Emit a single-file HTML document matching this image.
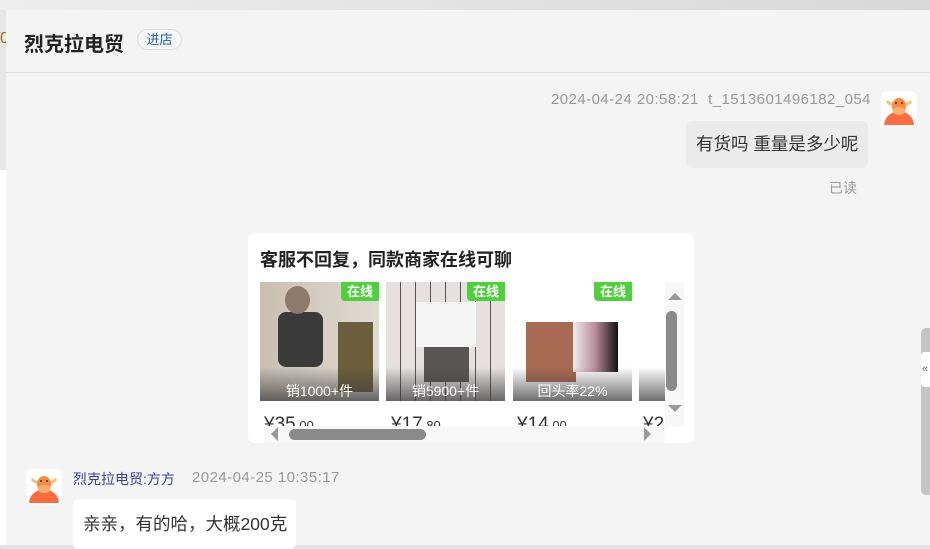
<!DOCTYPE html>
<html><head><meta charset="utf-8"><style>
*{margin:0;padding:0;box-sizing:border-box}
body{width:930px;height:545px;overflow:hidden;background:#e4e4e4;font-family:"Liberation Sans","Noto Sans CJK SC",sans-serif;position:relative}
.abs{position:absolute}
.av{width:36px;height:36px;border-radius:6px;background:#fff;overflow:hidden}
.tag{position:absolute;top:0;right:0;background:#4fd13c;color:#fff;font-size:13px;font-weight:bold;padding:0 6px;height:19px;line-height:19px;border-radius:0 0 0 4px}
.card{position:absolute;top:49px;width:119px;height:119px;overflow:hidden}
.ov{position:absolute;left:0;right:0;bottom:0;height:34px;background:linear-gradient(transparent,rgba(60,60,60,.75));color:#fff;font-size:14px;text-align:center;line-height:48px}
.pr{position:absolute;top:181px;font-size:19px;color:#333}
.pr small{font-size:13px}
.ts{font-size:15px;color:#999;letter-spacing:.45px}
</style></head><body>
<div class="abs" style="left:0;top:0;width:930px;height:10px;background:linear-gradient(90deg,#ededed,#d8d8d8)"></div>
<div class="abs" style="left:0;top:10px;width:6px;height:160px;background:#e6e6e6"></div>
<div class="abs" style="left:0;top:170px;width:6px;height:375px;background:#fff"></div>
<div class="abs" style="left:0;top:30px;font-size:16px;color:#a07020">0</div>
<div class="abs" style="left:6px;top:10px;width:924px;height:535px;background:#f4f4f4"></div>
<div class="abs" style="left:6px;top:72px;width:924px;height:1px;background:#e0e0e0"></div>
<div class="abs" style="left:24px;top:28px;font-size:20px;font-weight:bold;color:#222">烈克拉电贸</div>
<div class="abs" style="left:137px;top:29px;width:45px;height:21px;border:1px solid #ddd;border-radius:11px;background:#f7f7f7;font-size:13px;color:#1a5fc4;text-align:center;line-height:19px">进店</div>

<div class="abs ts" style="left:551px;top:91px">2024-04-24 20:58:21&nbsp;&nbsp;t_1513601496182_054</div>
<div class="abs av" style="left:881px;top:91px"><svg width="36" height="36" viewBox="0 0 36 36"><path d="M3 34 Q4 22 18 20 Q32 22 33 34Z" fill="#ff6b3d"/><path d="M6 10 Q9 14 13 13 M30 10 Q27 14 23 13" stroke="#f8c07a" stroke-width="3" fill="none"/><ellipse cx="18" cy="15" rx="7" ry="8" fill="#ff8a3d"/><ellipse cx="18" cy="20" rx="6" ry="4" fill="#ffb070"/><circle cx="15" cy="12" r="1" fill="#333"/><circle cx="21" cy="12" r="1" fill="#333"/></svg></div>
<div class="abs" style="left:686px;top:121px;width:182px;height:47px;background:#ebebeb;border-radius:6px;font-size:17.5px;color:#333;line-height:47px;padding-left:10px">有货吗 重量是多少呢</div>
<div class="abs" style="left:829px;top:178px;font-size:14px;color:#999">已读</div>

<div class="abs" style="left:248px;top:233px;width:446px;height:210px;background:#fff;border-radius:7px">
 <div class="abs" style="left:12px;top:13px;font-size:18px;font-weight:bold;color:#222">客服不回复，同款商家在线可聊</div>
 <div class="card" style="left:12px;background:linear-gradient(90deg,#c9bfb2,#d8d0c4 60%,#e0dbd3)"><div class="abs" style="left:18px;top:30px;width:45px;height:55px;background:#3a3a3a;border-radius:8px"></div><div class="abs" style="left:25px;top:4px;width:25px;height:28px;background:#8d7a6a;border-radius:50%"></div><div class="abs" style="left:78px;top:40px;width:35px;height:70px;background:#6b5e3a"></div><div class="tag">在线</div><div class="ov">销1000+件</div></div>
 <div class="card" style="left:138px;background:repeating-linear-gradient(90deg,#e6e0e0 0 14px,#555 14px 15px),#e6e0e0"><div class="abs" style="left:30px;top:20px;width:60px;height:45px;background:#f5f5f5"></div><div class="abs" style="left:38px;top:65px;width:45px;height:35px;background:#5a5555"></div><div class="tag">在线</div><div class="ov">销5900+件</div></div>
 <div class="card" style="left:265px;background:#fff"><div class="abs" style="left:13px;top:40px;width:50px;height:60px;background:#a86a52"></div><div class="abs" style="left:60px;top:40px;width:45px;height:50px;background:linear-gradient(90deg,#eee,#b88a9a,#111)"></div><div class="tag">在线</div><div class="ov">回头率22%</div></div>
 <div class="card" style="left:391px;width:26px;background:#fff"><div class="ov"></div></div>
 <div class="pr" style="left:16px">¥35<small>.00</small></div>
 <div class="pr" style="left:143px">¥17<small>.80</small></div>
 <div class="pr" style="left:269px">¥14<small>.00</small></div>
 <div class="pr" style="left:395px">¥2</div>
 <div class="abs" style="left:417px;top:49px;width:19px;height:145px;background:#f8f8f8"></div>
 <div class="abs" style="left:420px;top:60px;width:0;height:0;border-left:7px solid transparent;border-right:7px solid transparent;border-bottom:7px solid #999"></div>
 <div class="abs" style="left:418px;top:78px;width:11px;height:80px;background:#8a8a8a;border-radius:6px"></div>
 <div class="abs" style="left:420px;top:172px;width:0;height:0;border-left:7px solid transparent;border-right:7px solid transparent;border-top:7px solid #999"></div>
 <div class="abs" style="left:16px;top:193px;width:401px;height:17px;background:#f8f8f8"></div>
 <div class="abs" style="left:23px;top:194px;width:0;height:0;border-top:7px solid transparent;border-bottom:7px solid transparent;border-right:7px solid #999"></div>
 <div class="abs" style="left:41px;top:196px;width:137px;height:11px;background:#8a8a8a;border-radius:6px"></div>
 <div class="abs" style="left:396px;top:194px;width:0;height:0;border-top:7px solid transparent;border-bottom:7px solid transparent;border-left:7px solid #999"></div>
</div>

<div class="abs av" style="left:26px;top:469px"><svg width="36" height="36" viewBox="0 0 36 36"><path d="M3 34 Q4 22 18 20 Q32 22 33 34Z" fill="#ff6b3d"/><path d="M6 10 Q9 14 13 13 M30 10 Q27 14 23 13" stroke="#f8c07a" stroke-width="3" fill="none"/><ellipse cx="18" cy="15" rx="7" ry="8" fill="#ff8a3d"/><ellipse cx="18" cy="20" rx="6" ry="4" fill="#ffb070"/><circle cx="15" cy="12" r="1" fill="#333"/><circle cx="21" cy="12" r="1" fill="#333"/></svg></div>
<div class="abs" style="left:73px;top:469px;font-size:14px;color:#3d3db0">烈克拉电贸:方方</div>
<div class="abs ts" style="left:192px;top:469px">2024-04-25 10:35:17</div>
<div class="abs" style="left:73px;top:499px;width:223px;height:50px;background:#fff;border-radius:6px;font-size:17.5px;color:#333;padding:12px 0 0 10px">亲亲，有的哈，大概200克</div>

<div class="abs" style="left:921px;top:328px;width:9px;height:167px;background:#c4c4c4;border-radius:5px 0 0 5px"></div>
<div class="abs" style="left:921px;top:352px;width:9px;height:35px;background:#fff;border-radius:4px 0 0 4px;font-size:11px;color:#666;line-height:35px;padding-left:1px">«</div>
</body></html>
